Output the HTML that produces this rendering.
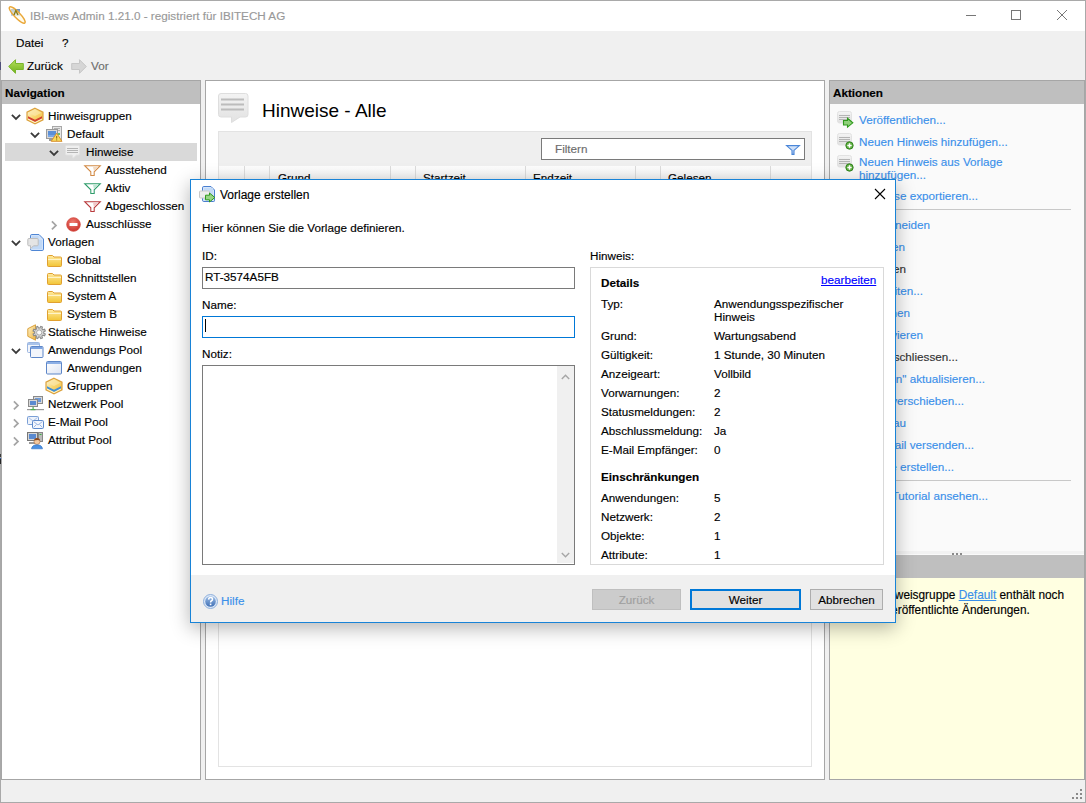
<!DOCTYPE html>
<html><head><meta charset="utf-8">
<style>
*{box-sizing:border-box;margin:0;padding:0}
html,body{width:1086px;height:803px;overflow:hidden;background:#f0f0f0}
body{position:relative;font-family:"Liberation Sans",sans-serif;font-size:11.7px;line-height:14px;color:#000}
.a{position:absolute}
svg.a{overflow:visible}
.t{position:absolute;white-space:nowrap;font-size:11.7px;line-height:14px;-webkit-text-stroke:0.15px currentColor}
.b{font-weight:bold}
.lk{color:#3a90ea}
</style></head><body>
<div class="a" style="left:0px;top:0px;width:1086px;height:803px;border:1px solid #a9a9a9"></div>
<div class="a" style="left:1px;top:1px;width:1084px;height:30px;background:#fff"></div>
<svg class="a" style="left:6px;top:4px;" width="22" height="22" viewBox="0 0 22 22">
<defs><linearGradient id="aig" x1="0" y1="0" x2="0" y2="1"><stop offset="0" stop-color="#6f8fb5"/><stop offset="1" stop-color="#c4dcf4"/></linearGradient></defs>
<rect x="5" y="5" width="9" height="7" fill="url(#aig)"/>
<ellipse cx="11.2" cy="11" rx="11" ry="2.9" transform="rotate(46 11.2 11)" fill="#fff8dc" fill-opacity=".55" stroke="#eaa83a" stroke-width="1.4"/>
<path d="M8 11L9.8 6.5L12 11" fill="none" stroke="#8a7a10" stroke-width="1.3"/></svg>
<div class="t" style="left:30px;top:9px;color:#999">IBI-aws Admin 1.21.0 - registriert für IBITECH AG</div>
<div class="a" style="left:966px;top:15px;width:10px;height:1px;background:#777"></div>
<div class="a" style="left:1011px;top:10px;width:10px;height:10px;border:1px solid #777"></div>
<svg class="a" style="left:1056px;top:9px;" width="12" height="12" viewBox="0 0 12 12"><path d="M1 1L11 11M11 1L1 11" stroke="#777" stroke-width="1"/></svg>
<div class="t" style="left:16px;top:36px;">Datei</div>
<div class="t" style="left:62px;top:36px;">?</div>
<svg class="a" style="left:8px;top:59px;" width="16" height="15" viewBox="0 0 16 15"><defs><linearGradient id="ga" x1="0" y1="0" x2="0" y2="1"><stop offset="0" stop-color="#b6e05a"/><stop offset="1" stop-color="#6fb21c"/></linearGradient></defs><path d="M0.7 7.5L7.5 0.7V4.5H15.3V10.5H7.5V14.3Z" fill="url(#ga)" stroke="#79b52a" stroke-width="1"/></svg>
<div class="t" style="left:27px;top:59px;">Zurück</div>
<svg class="a" style="left:71px;top:59px;" width="16" height="15" viewBox="0 0 16 15"><path d="M15.3 7.5L8.5 0.7V4.5H0.7V10.5H8.5V14.3Z" fill="#d6d6d6" stroke="#c6c6c6" stroke-width="1"/></svg>
<div class="t" style="left:91px;top:59px;color:#6d6d6d">Vor</div>
<div class="a" style="left:1px;top:80px;width:200px;height:700px;border:1px solid #a6a6a6;background:#fff"></div>
<div class="a" style="left:2px;top:81px;width:198px;height:23px;background:#bfbfbf"></div>
<div class="t b" style="left:5px;top:86px;">Navigation</div>
<div class="a" style="left:5px;top:143px;width:192px;height:18px;background:#d9d9d9"></div>
<svg class="a" style="left:11px;top:114px;" width="10" height="6" viewBox="0 0 10 6"><path d="M0.9 0.9L5 5L9.1 0.9" fill="none" stroke="#3a3a3a" stroke-width="1.8"/></svg>
<svg class="a" style="left:26px;top:107px;" width="18" height="18" viewBox="0 0 18 18">
<defs><linearGradient id="hg27108" x1="0" y1="0" x2="1" y2="1"><stop offset="0" stop-color="#fffbe8"/><stop offset=".5" stop-color="#f8d66e"/><stop offset="1" stop-color="#f0b840"/></linearGradient></defs>
<path d="M9 1.2L17 5.2V12.8L9 16.8L1 12.8V5.2Z" fill="url(#hg27108)" stroke="#dca23e" stroke-width="1.2"/>
<path d="M9 2.5L15.5 5.8L9 9L2.5 5.8Z" fill="#fbe7a8" opacity=".7"/>
<path d="M2 9.2L9 12.8L16 9.2V11.4L9 15L2 11.4Z" fill="#d2412f"/>
<path d="M2 12L9 15.6L16 12" fill="none" stroke="#fff7d6" stroke-width="1"/></svg>
<div class="t" style="left:48px;top:109px;">Hinweisgruppen</div>
<svg class="a" style="left:30px;top:132px;" width="10" height="6" viewBox="0 0 10 6"><path d="M0.9 0.9L5 5L9.1 0.9" fill="none" stroke="#3a3a3a" stroke-width="1.8"/></svg>
<svg class="a" style="left:46px;top:126px;" width="17" height="17" viewBox="0 0 17 17">
<rect x="6.5" y="0.5" width="9" height="13" fill="#e6e6e6" stroke="#a8a8a8"/>
<rect x="8" y="2" width="6" height="1" fill="#b0b0b0"/><rect x="8" y="4" width="6" height="1" fill="#b0b0b0"/>
<circle cx="13" cy="8" r="1" fill="#3cb043"/>
<rect x="0.5" y="3.5" width="11" height="9" fill="#d8d8d8" stroke="#9a9a9a"/>
<rect x="2" y="5" width="8" height="6" fill="#5b8fd6"/>
<rect x="2" y="9" width="8" height="2" fill="#7aa7e6"/>
<rect x="3" y="13" width="5" height="2" fill="#9a9a9a"/>
<path d="M10.7 7.2L16 15.3H5.2Z" fill="#f9dc5a" stroke="#d89030" stroke-width="1" stroke-linejoin="round"/>
<rect x="10.2" y="10" width="1" height="2.6" fill="#8a5a10"/><rect x="10.2" y="13.4" width="1" height="1" fill="#8a5a10"/></svg>
<div class="t" style="left:67px;top:127px;">Default</div>
<svg class="a" style="left:49px;top:150px;" width="10" height="6" viewBox="0 0 10 6"><path d="M0.9 0.9L5 5L9.1 0.9" fill="none" stroke="#3a3a3a" stroke-width="1.8"/></svg>
<svg class="a" style="left:65px;top:145px;" width="15" height="14" viewBox="0 0 15 14">
<path d="M0.5 1.5Q0.5 0.5 1.5 0.5H13.5Q14.5 0.5 14.5 1.5V9Q14.5 10 13.5 10H11.5L8 13.3L7.2 10H1.5Q0.5 10 0.5 9Z" fill="#efefef" stroke="#e2e2e2"/>
<rect x="2" y="3" width="11" height="1" fill="#b5b5b5"/><rect x="2" y="5" width="11" height="1" fill="#b5b5b5"/><rect x="2" y="7" width="11" height="1" fill="#b5b5b5"/></svg>
<div class="t" style="left:86px;top:145px;">Hinweise</div>
<svg class="a" style="left:84px;top:165px;" width="17" height="12" viewBox="0 0 17 12">
<path d="M0.7 0.7H16.3L10.2 6.8V10.5H6.8V6.8Z" fill="#fff" stroke="#d28a45" stroke-width="1.05" stroke-linejoin="miter"/>
<path d="M9 1.8H14.5L10 6.3Z" fill="#f3d9c0"/></svg>
<div class="t" style="left:105px;top:163px;">Ausstehend</div>
<svg class="a" style="left:84px;top:183px;" width="17" height="12" viewBox="0 0 17 12">
<path d="M0.7 0.7H16.3L10.2 6.8V10.5H6.8V6.8Z" fill="#fff" stroke="#2e9c6a" stroke-width="1.05" stroke-linejoin="miter"/>
<path d="M9 1.8H14.5L10 6.3Z" fill="#bfe5d2"/></svg>
<div class="t" style="left:105px;top:181px;">Aktiv</div>
<svg class="a" style="left:84px;top:201px;" width="17" height="12" viewBox="0 0 17 12">
<path d="M0.7 0.7H16.3L10.2 6.8V10.5H6.8V6.8Z" fill="#fff" stroke="#b83a3c" stroke-width="1.05" stroke-linejoin="miter"/>
<path d="M9 1.8H14.5L10 6.3Z" fill="#f0c8c8"/></svg>
<div class="t" style="left:105px;top:199px;">Abgeschlossen</div>
<svg class="a" style="left:51px;top:220px;" width="6" height="10" viewBox="0 0 6 10"><path d="M0.9 1.4L5 5.4L0.9 9.4" fill="none" stroke="#a4a4a4" stroke-width="1.7"/></svg>
<svg class="a" style="left:66px;top:217px;" width="15" height="15" viewBox="0 0 15 15">
<defs><radialGradient id="rb" cx=".45" cy=".35" r=".7"><stop offset="0" stop-color="#f07e72"/><stop offset="1" stop-color="#c8302a"/></radialGradient></defs>
<circle cx="7.5" cy="7.5" r="6.8" fill="url(#rb)" stroke="#d4463c" stroke-width=".8"/>
<rect x="3.5" y="6" width="8" height="3" rx=".5" fill="#fff"/></svg>
<div class="t" style="left:86px;top:217px;">Ausschlüsse</div>
<svg class="a" style="left:11px;top:240px;" width="10" height="6" viewBox="0 0 10 6"><path d="M0.9 0.9L5 5L9.1 0.9" fill="none" stroke="#3a3a3a" stroke-width="1.8"/></svg>
<svg class="a" style="left:27px;top:234px;" width="17" height="17" viewBox="0 0 17 17">
<path d="M3.5 1.8Q3.5 0.5 4.8 0.5H12L16.5 5V15.2Q16.5 16.5 15.2 16.5H4.8Q3.5 16.5 3.5 15.2Z" fill="#d2e3fa" stroke="#4f86d4" stroke-width="1"/>
<path d="M5 2H11.5V6H15V15H5Z" fill="#c0d8f6"/>
<path d="M0.8 5.5Q0.8 4.5 1.8 4.5H10.2Q11.2 4.5 11.2 5.5V10.8Q11.2 11.8 10.2 11.8H6.5L3.5 14.8V11.8H1.8Q0.8 11.8 0.8 10.8Z" fill="#e4e4e4" stroke="#bdbdbd" stroke-width="1"/></svg>
<div class="t" style="left:48px;top:235px;">Vorlagen</div>
<svg class="a" style="left:47px;top:255px;" width="15" height="12" viewBox="0 0 15 12">
<defs><linearGradient id="fg" x1="0" y1="0" x2="0" y2="1"><stop offset="0" stop-color="#ffeaa0"/><stop offset="1" stop-color="#f2c535"/></linearGradient></defs>
<path d="M0.5 1.5Q0.5 0.5 1.5 0.5H5.5L7 2H13.5Q14.5 2 14.5 3V10.5Q14.5 11.5 13.5 11.5H1.5Q0.5 11.5 0.5 10.5Z" fill="url(#fg)" stroke="#e0a030"/>
<path d="M1 4.5H14" stroke="#fff3c8" stroke-width="1"/></svg>
<div class="t" style="left:67px;top:253px;">Global</div>
<svg class="a" style="left:47px;top:273px;" width="15" height="12" viewBox="0 0 15 12">
<defs><linearGradient id="fg" x1="0" y1="0" x2="0" y2="1"><stop offset="0" stop-color="#ffeaa0"/><stop offset="1" stop-color="#f2c535"/></linearGradient></defs>
<path d="M0.5 1.5Q0.5 0.5 1.5 0.5H5.5L7 2H13.5Q14.5 2 14.5 3V10.5Q14.5 11.5 13.5 11.5H1.5Q0.5 11.5 0.5 10.5Z" fill="url(#fg)" stroke="#e0a030"/>
<path d="M1 4.5H14" stroke="#fff3c8" stroke-width="1"/></svg>
<div class="t" style="left:67px;top:271px;">Schnittstellen</div>
<svg class="a" style="left:47px;top:291px;" width="15" height="12" viewBox="0 0 15 12">
<defs><linearGradient id="fg" x1="0" y1="0" x2="0" y2="1"><stop offset="0" stop-color="#ffeaa0"/><stop offset="1" stop-color="#f2c535"/></linearGradient></defs>
<path d="M0.5 1.5Q0.5 0.5 1.5 0.5H5.5L7 2H13.5Q14.5 2 14.5 3V10.5Q14.5 11.5 13.5 11.5H1.5Q0.5 11.5 0.5 10.5Z" fill="url(#fg)" stroke="#e0a030"/>
<path d="M1 4.5H14" stroke="#fff3c8" stroke-width="1"/></svg>
<div class="t" style="left:67px;top:289px;">System A</div>
<svg class="a" style="left:47px;top:309px;" width="15" height="12" viewBox="0 0 15 12">
<defs><linearGradient id="fg" x1="0" y1="0" x2="0" y2="1"><stop offset="0" stop-color="#ffeaa0"/><stop offset="1" stop-color="#f2c535"/></linearGradient></defs>
<path d="M0.5 1.5Q0.5 0.5 1.5 0.5H5.5L7 2H13.5Q14.5 2 14.5 3V10.5Q14.5 11.5 13.5 11.5H1.5Q0.5 11.5 0.5 10.5Z" fill="url(#fg)" stroke="#e0a030"/>
<path d="M1 4.5H14" stroke="#fff3c8" stroke-width="1"/></svg>
<div class="t" style="left:67px;top:307px;">System B</div>
<svg class="a" style="left:27px;top:324px;" width="17" height="17" viewBox="0 0 17 17">
<defs><linearGradient id="stg" x1="0" y1="0" x2="1" y2="1"><stop offset="0" stop-color="#fff4cc"/><stop offset="1" stop-color="#efb43c"/></linearGradient></defs>
<path d="M8.5 0.8L8.5 16.2L0.8 12.3V4.7Z" fill="url(#stg)" stroke="#dba23c" stroke-width="1"/>
<path d="M16.74 9.22L18.31 10.02L17.60 11.75L15.92 11.20L14.90 12.22L15.45 13.90L13.72 14.61L12.92 13.04L11.48 13.04L10.68 14.61L8.95 13.90L9.50 12.22L8.48 11.20L6.80 11.75L6.09 10.02L7.66 9.22L7.66 7.78L6.09 6.98L6.80 5.25L8.48 5.80L9.50 4.78L8.95 3.10L10.68 2.39L11.48 3.96L12.92 3.96L13.72 2.39L15.45 3.10L14.90 4.78L15.92 5.80L17.60 5.25L18.31 6.98L16.74 7.78Z" fill="#dadada" stroke="#8c8c8c" stroke-width="1.1"/>
<circle cx="12.2" cy="8.5" r="2.6" fill="#fafafa" stroke="#a0a0a0" stroke-width=".9"/></svg>
<div class="t" style="left:48px;top:325px;">Statische Hinweise</div>
<svg class="a" style="left:11px;top:348px;" width="10" height="6" viewBox="0 0 10 6"><path d="M0.9 0.9L5 5L9.1 0.9" fill="none" stroke="#3a3a3a" stroke-width="1.8"/></svg>
<svg class="a" style="left:27px;top:342px;" width="17" height="16" viewBox="0 0 17 16">
<rect x="0.5" y="0.5" width="12" height="10" rx="1" fill="#f2f5fb" stroke="#9ab5e0"/><rect x="1" y="1" width="11" height="2" fill="#a9c3ea"/>
<rect x="3.5" y="4.5" width="12.5" height="11" rx="1" fill="#f2f5fb" stroke="#5d86c8"/><rect x="4" y="5" width="11.5" height="2" fill="#7ea4e0"/></svg>
<div class="t" style="left:48px;top:343px;">Anwendungs Pool</div>
<svg class="a" style="left:46px;top:361px;" width="16" height="14" viewBox="0 0 16 14">
<defs><linearGradient id="wg" x1="0" y1="0" x2="1" y2="1"><stop offset="0" stop-color="#ffffff"/><stop offset="1" stop-color="#dde4f2"/></linearGradient></defs>
<rect x="0.5" y="0.5" width="15" height="12.5" rx="1" fill="url(#wg)" stroke="#5d86c8"/><rect x="1" y="1" width="14" height="2" fill="#8db0e6"/></svg>
<div class="t" style="left:67px;top:361px;">Anwendungen</div>
<svg class="a" style="left:45px;top:377px;" width="18" height="18" viewBox="0 0 18 18">
<defs><linearGradient id="hg46378" x1="0" y1="0" x2="1" y2="1"><stop offset="0" stop-color="#fffbe8"/><stop offset=".5" stop-color="#f8d66e"/><stop offset="1" stop-color="#f0b840"/></linearGradient></defs>
<path d="M9 1.2L17 5.2V12.8L9 16.8L1 12.8V5.2Z" fill="url(#hg46378)" stroke="#dca23e" stroke-width="1.2"/>
<path d="M9 2.5L15.5 5.8L9 9L2.5 5.8Z" fill="#fbe7a8" opacity=".7"/>
<path d="M2 9.2L9 12.8L16 9.2V11.4L9 15L2 11.4Z" fill="#3f8fd8"/>
<path d="M2 12L9 15.6L16 12" fill="none" stroke="#fff7d6" stroke-width="1"/></svg>
<div class="t" style="left:67px;top:379px;">Gruppen</div>
<svg class="a" style="left:13px;top:400px;" width="6" height="10" viewBox="0 0 6 10"><path d="M0.9 1.4L5 5.4L0.9 9.4" fill="none" stroke="#a4a4a4" stroke-width="1.7"/></svg>
<svg class="a" style="left:27px;top:396px;" width="17" height="16" viewBox="0 0 17 16">
<rect x="6.5" y="0.5" width="9" height="7" fill="#d9d9d9" stroke="#8a8a8a"/><rect x="8" y="2" width="6" height="4" fill="#6f9bd8"/>
<rect x="1.5" y="3.5" width="9" height="7" fill="#d9d9d9" stroke="#8a8a8a"/><rect x="3" y="5" width="6" height="4" fill="#5b8bd0"/>
<rect x="0" y="13" width="17" height="1.2" fill="#9a9a9a"/><rect x="5.5" y="11" width="1.2" height="3" fill="#4caf50"/><rect x="3.5" y="13" width="5" height="1.2" fill="#4caf50"/></svg>
<div class="t" style="left:48px;top:397px;">Netzwerk Pool</div>
<svg class="a" style="left:13px;top:418px;" width="6" height="10" viewBox="0 0 6 10"><path d="M0.9 1.4L5 5.4L0.9 9.4" fill="none" stroke="#a4a4a4" stroke-width="1.7"/></svg>
<svg class="a" style="left:27px;top:416px;" width="17" height="13" viewBox="0 0 17 13">
<rect x="0.5" y="0.5" width="11" height="8" rx="1" fill="#eef3fb" stroke="#7a9fd6"/><path d="M1.5 1.5L6 5L10.5 1.5" fill="none" stroke="#a9c0e6"/>
<rect x="5.5" y="4.5" width="11" height="8" rx="1" fill="#f4f7fd" stroke="#5f8bcc"/><path d="M6.5 5.5L11 9L15.5 5.5M6.5 11.5L9.5 8.5M15.5 11.5L12.5 8.5" fill="none" stroke="#9cb6e2"/></svg>
<div class="t" style="left:48px;top:415px;">E-Mail Pool</div>
<svg class="a" style="left:13px;top:436px;" width="6" height="10" viewBox="0 0 6 10"><path d="M0.9 1.4L5 5.4L0.9 9.4" fill="none" stroke="#a4a4a4" stroke-width="1.7"/></svg>
<svg class="a" style="left:27px;top:432px;" width="17" height="17" viewBox="0 0 17 17">
<rect x="0.5" y="0.5" width="10" height="8" fill="#d6d6d6" stroke="#777"/><rect x="2" y="2" width="7" height="5" fill="#5a8ad0"/>
<rect x="11.5" y="0.5" width="4" height="9" fill="#bbb" stroke="#888"/><rect x="12.5" y="2" width="2" height="1" fill="#3cb043"/>
<rect x="2" y="10" width="6" height="2" fill="#999"/>
<circle cx="10" cy="9.5" r="3" fill="#f3c9a0" stroke="#a4663a" stroke-width=".6"/><path d="M7 8.5Q7.5 5.8 10 6Q12.8 6 13 8.5Q11 7.5 7 8.5Z" fill="#8a4a20"/>
<path d="M4.5 16.8Q5 12.8 10 12.8Q15 12.8 15.5 16.8Z" fill="#4a90e2" stroke="#2f6fbf" stroke-width=".6"/></svg>
<div class="t" style="left:48px;top:433px;">Attribut Pool</div>
<div class="a" style="left:205px;top:80px;width:620px;height:700px;border:1px solid #a6a6a6;background:#fff"></div>
<svg class="a" style="left:218px;top:93px;" width="31" height="30" viewBox="0 0 31 30">
<defs><linearGradient id="bbg" x1="0" y1="0" x2="0" y2="1"><stop offset="0" stop-color="#f3f3f3"/><stop offset="1" stop-color="#e2e2e2"/></linearGradient></defs>
<path d="M0.5 3Q0.5 0.5 3 0.5H27.5Q30 0.5 30 3V21.5Q30 24 27.5 24H22L13.5 29.5V24H3Q0.5 24 0.5 21.5Z" fill="url(#bbg)" stroke="#dedede"/>
<rect x="3" y="5.5" width="23" height="2" fill="#bcbcbc"/><rect x="3" y="10.5" width="23" height="2" fill="#bcbcbc"/><rect x="3" y="15.5" width="23" height="2" fill="#bcbcbc"/></svg>
<div class="t" style="left:262px;top:99px;font-size:19px;line-height:24px;-webkit-text-stroke:0">Hinweise - Alle</div>
<div class="a" style="left:218px;top:131px;width:594px;height:636px;border:1px solid #e3e3e3;background:#fff"></div>
<div class="a" style="left:219px;top:132px;width:592px;height:34px;background:#efefef"></div>
<div class="a" style="left:541px;top:138px;width:264px;height:22px;border:1px solid #7a7a7a;background:#fff"></div>
<div class="t" style="left:555px;top:142px;color:#6d6d6d">Filtern</div>
<svg class="a" style="left:786px;top:145px;" width="14" height="10" viewBox="0 0 14 10"><defs><linearGradient id="flg" x1="0" y1="0" x2="0" y2="1"><stop offset="0" stop-color="#dce9fb"/><stop offset="1" stop-color="#a9c6ef"/></linearGradient></defs><path d="M0.6 0.6H13.4L8 5.4V9.4H6V5.4Z" fill="url(#flg)" stroke="#4a86d8" stroke-width="1.1"/></svg>
<div class="a" style="left:219px;top:166px;width:592px;height:24px;background:linear-gradient(#fdfdfd,#ececec)"></div>
<div class="a" style="left:244px;top:166px;width:1px;height:24px;background:#dcdcdc"></div>
<div class="a" style="left:269px;top:166px;width:1px;height:24px;background:#dcdcdc"></div>
<div class="a" style="left:390px;top:166px;width:1px;height:24px;background:#dcdcdc"></div>
<div class="a" style="left:415px;top:166px;width:1px;height:24px;background:#dcdcdc"></div>
<div class="a" style="left:525px;top:166px;width:1px;height:24px;background:#dcdcdc"></div>
<div class="a" style="left:635px;top:166px;width:1px;height:24px;background:#dcdcdc"></div>
<div class="a" style="left:660px;top:166px;width:1px;height:24px;background:#dcdcdc"></div>
<div class="a" style="left:770px;top:166px;width:1px;height:24px;background:#dcdcdc"></div>
<div class="t" style="left:278px;top:171px;">Grund</div>
<div class="t" style="left:423px;top:171px;">Startzeit</div>
<div class="t" style="left:533px;top:171px;">Endzeit</div>
<div class="t" style="left:668px;top:171px;">Gelesen</div>
<div class="a" style="left:829px;top:80px;width:256px;height:700px;border:1px solid #a6a6a6;background:#fafafa"></div>
<div class="a" style="left:830px;top:81px;width:254px;height:23px;background:#bfbfbf"></div>
<div class="t b" style="left:833px;top:86px;">Aktionen</div>
<svg class="a" style="left:837px;top:111px;" width="17" height="17" viewBox="0 0 17 17">
<defs><linearGradient id="nbg" x1="0" y1="0" x2="0" y2="1"><stop offset="0" stop-color="#f4f4f4"/><stop offset="1" stop-color="#e0e0e0"/></linearGradient></defs>
<rect x="0.5" y="0.5" width="14" height="11.5" rx="2" fill="url(#nbg)" stroke="#e2e2e2"/>
<rect x="2" y="4" width="11" height="1" fill="#b4b4b4"/><rect x="2" y="6" width="11" height="1" fill="#b4b4b4"/><rect x="2" y="8" width="11" height="1" fill="#b4b4b4"/>
<path d="M6.5 9.5H10.5V7.3L15.8 11.8L10.5 16.2V14H6.5Z" fill="#8fd07a" stroke="#2f9a1c" stroke-width="1.1" stroke-linejoin="miter"/></svg>
<div class="t lk" style="left:859px;top:113px;">Veröffentlichen...</div>
<svg class="a" style="left:837px;top:133px;" width="17" height="17" viewBox="0 0 17 17">
<rect x="0.5" y="0.5" width="14" height="11.5" rx="2" fill="url(#nbg)" stroke="#e2e2e2"/>
<rect x="2" y="4" width="11" height="1" fill="#b4b4b4"/><rect x="2" y="6" width="11" height="1" fill="#b4b4b4"/><rect x="2" y="8" width="11" height="1" fill="#b4b4b4"/>
<circle cx="12.5" cy="12.5" r="3.7" fill="#5cae3c" stroke="#2f7f1c" stroke-width=".9"/><path d="M12.5 10.3V14.7M10.3 12.5H14.7" stroke="#fff" stroke-width="1.5"/></svg>
<div class="t lk" style="left:859px;top:135px;">Neuen Hinweis hinzufügen...</div>
<svg class="a" style="left:837px;top:155px;" width="17" height="17" viewBox="0 0 17 17">
<rect x="0.5" y="0.5" width="14" height="11.5" rx="2" fill="url(#nbg)" stroke="#e2e2e2"/>
<rect x="2" y="4" width="11" height="1" fill="#b4b4b4"/><rect x="2" y="6" width="11" height="1" fill="#b4b4b4"/><rect x="2" y="8" width="11" height="1" fill="#b4b4b4"/>
<circle cx="12.5" cy="12.5" r="3.7" fill="#5cae3c" stroke="#2f7f1c" stroke-width=".9"/><path d="M12.5 10.3V14.7M10.3 12.5H14.7" stroke="#fff" stroke-width="1.5"/></svg>
<div class="t lk" style="left:859px;top:155px;">Neuen Hinweis aus Vorlage</div>
<div class="t lk" style="left:859px;top:168px;">hinzufügen...</div>
<div class="t lk" style="left:859px;top:189px;">Hinweise exportieren...</div>
<div class="a" style="left:837px;top:209px;width:234px;height:1px;background:#c8c8c8"></div>
<div class="t" style="right:156px;top:218px;color:#3a90ea">Ausschneiden</div>
<div class="t" style="right:181px;top:240px;color:#3a90ea">Kopieren</div>
<div class="t" style="right:180px;top:262px;color:#333">Einfügen</div>
<div class="t" style="right:163px;top:284px;color:#3a90ea">Bearbeiten...</div>
<div class="t" style="right:176px;top:306px;color:#3a90ea">Löschen</div>
<div class="t" style="right:163px;top:328px;color:#3a90ea">Aktivieren</div>
<div class="t" style="right:128px;top:350px;color:#333">Abschliessen...</div>
<div class="t" style="right:101px;top:372px;color:#3a90ea">Vorlage "Hinweisen" aktualisieren...</div>
<div class="t" style="right:122px;top:394px;color:#3a90ea">Hinweise verschieben...</div>
<div class="t" style="right:180px;top:416px;color:#3a90ea">Vorschau</div>
<div class="t" style="right:112px;top:438px;color:#3a90ea">E-Mail versenden...</div>
<div class="t" style="right:132px;top:460px;color:#3a90ea">Vorlage erstellen...</div>
<div class="a" style="left:837px;top:480px;width:234px;height:1px;background:#c8c8c8"></div>
<div class="t lk" style="right:98px;top:489px">Lernvideo / Tutorial ansehen...</div>
<div class="a" style="left:830px;top:551px;width:254px;height:3px;background:#f2f2f2"></div>
<div class="a" style="left:952px;top:553px;width:2px;height:2px;background:#8a8a8a"></div>
<div class="a" style="left:956px;top:553px;width:2px;height:2px;background:#8a8a8a"></div>
<div class="a" style="left:960px;top:553px;width:2px;height:2px;background:#8a8a8a"></div>
<div class="a" style="left:830px;top:555px;width:254px;height:23px;background:#bfbfbf"></div>
<div class="a" style="left:830px;top:578px;width:254px;height:201px;background:#ffffe1"></div>
<div class="t" style="left:856px;top:588px;font-size:11.85px">Die Hinweisgruppe <span style="color:#3a90ea;text-decoration:underline">Default</span> enthält noch</div>
<div class="t" style="left:872px;top:603px;font-size:11.85px">unveröffentlichte Änderungen.</div>
<div class="a" style="left:1080px;top:797px;width:2px;height:2px;background:#8a8a8a"></div>
<div class="a" style="left:1076px;top:797px;width:2px;height:2px;background:#8a8a8a"></div>
<div class="a" style="left:1072px;top:797px;width:2px;height:2px;background:#8a8a8a"></div>
<div class="a" style="left:1080px;top:793px;width:2px;height:2px;background:#8a8a8a"></div>
<div class="a" style="left:1076px;top:793px;width:2px;height:2px;background:#8a8a8a"></div>
<div class="a" style="left:1080px;top:789px;width:2px;height:2px;background:#8a8a8a"></div>
<div class="a" style="left:190px;top:179px;width:706px;height:444px;border:1px solid #1883d7;background:#fff;box-shadow:0 5px 18px rgba(0,0,0,.30)"></div>
<div class="a" style="left:191px;top:575px;width:704px;height:47px;background:#f0f0f0"></div>
<svg class="a" style="left:199px;top:186px;" width="17" height="17" viewBox="0 0 17 17">
<path d="M3.5 1.8Q3.5 0.5 4.8 0.5H12L15.5 4V14.7Q15.5 15.5 14.7 15.5H4.8Q3.5 15.5 3.5 14.2Z" fill="#d6e6fb" stroke="#4a7fcf" stroke-width="1"/>
<rect x="5" y="2" width="9" height="12" fill="#c4dbf7"/>
<rect x="0.5" y="5" width="10" height="7" rx="1" fill="#ececec" stroke="#c8c8c8"/>
<path d="M6.5 9.2H10.5V7L15.8 11.5L10.5 16V13.8H6.5Z" fill="#98d486" stroke="#2e9a1c" stroke-width="1"/></svg>
<div class="t" style="left:220px;top:188px;font-size:12px">Vorlage erstellen</div>
<svg class="a" style="left:874px;top:188px;" width="12" height="12" viewBox="0 0 12 12"><path d="M1 1L11 11M11 1L1 11" stroke="#000" stroke-width="1.1"/></svg>
<div class="t" style="left:202px;top:221px;">Hier können Sie die Vorlage definieren.</div>
<div class="t" style="left:202px;top:249px;">ID:</div>
<div class="a" style="left:202px;top:267px;width:373px;height:22px;border:1px solid #7a7a7a;background:#fff"></div>
<div class="t" style="left:205px;top:270px;">RT-3574A5FB</div>
<div class="t" style="left:202px;top:298px;">Name:</div>
<div class="a" style="left:202px;top:316px;width:373px;height:22px;border:1px solid #0078d7;background:#fff"></div>
<div class="a" style="left:205px;top:319px;width:1px;height:13px;background:#000"></div>
<div class="t" style="left:202px;top:347px;">Notiz:</div>
<div class="a" style="left:202px;top:365px;width:373px;height:200px;border:1px solid #7a7a7a;background:#fff"></div>
<div class="a" style="left:557px;top:366px;width:17px;height:197px;background:#f0f0f0"></div>
<svg class="a" style="left:561px;top:374px;" width="9" height="6" viewBox="0 0 9 6"><path d="M0.8 5L4.5 1.2L8.2 5" fill="none" stroke="#a6a6a6" stroke-width="1.4"/></svg>
<svg class="a" style="left:561px;top:552px;" width="9" height="6" viewBox="0 0 9 6"><path d="M0.8 1L4.5 4.8L8.2 1" fill="none" stroke="#a6a6a6" stroke-width="1.4"/></svg>
<div class="t" style="left:590px;top:249px;">Hinweis:</div>
<div class="a" style="left:590px;top:267px;width:294px;height:298px;border:1px solid #d9d9d9;background:#fff"></div>
<div class="t b" style="left:601px;top:276px;">Details</div>
<div class="t" style="left:821px;top:273px;color:#00f;text-decoration:underline">bearbeiten</div>
<div class="t" style="left:601px;top:297px;">Typ:</div>
<div class="t" style="left:714px;top:297px;">Anwendungsspezifischer</div>
<div class="t" style="left:714px;top:310px;">Hinweis</div>
<div class="t" style="left:601px;top:329px;">Grund:</div>
<div class="t" style="left:714px;top:329px;">Wartungsabend</div>
<div class="t" style="left:601px;top:348px;">Gültigkeit:</div>
<div class="t" style="left:714px;top:348px;">1 Stunde, 30 Minuten</div>
<div class="t" style="left:601px;top:367px;">Anzeigeart:</div>
<div class="t" style="left:714px;top:367px;">Vollbild</div>
<div class="t" style="left:601px;top:386px;">Vorwarnungen:</div>
<div class="t" style="left:714px;top:386px;">2</div>
<div class="t" style="left:601px;top:405px;">Statusmeldungen:</div>
<div class="t" style="left:714px;top:405px;">2</div>
<div class="t" style="left:601px;top:424px;">Abschlussmeldung:</div>
<div class="t" style="left:714px;top:424px;">Ja</div>
<div class="t" style="left:601px;top:443px;">E-Mail Empfänger:</div>
<div class="t" style="left:714px;top:443px;">0</div>
<div class="t" style="left:601px;top:491px;">Anwendungen:</div>
<div class="t" style="left:714px;top:491px;">5</div>
<div class="t" style="left:601px;top:510px;">Netzwerk:</div>
<div class="t" style="left:714px;top:510px;">2</div>
<div class="t" style="left:601px;top:529px;">Objekte:</div>
<div class="t" style="left:714px;top:529px;">1</div>
<div class="t" style="left:601px;top:548px;">Attribute:</div>
<div class="t" style="left:714px;top:548px;">1</div>
<div class="t b" style="left:601px;top:470px;">Einschränkungen</div>
<svg class="a" style="left:203px;top:594px;" width="15" height="15" viewBox="0 0 15 15">
<defs><linearGradient id="hlg" x1="0" y1="0" x2="0" y2="1"><stop offset="0" stop-color="#9cbde6"/><stop offset="1" stop-color="#3f6fb5"/></linearGradient></defs>
<circle cx="7.5" cy="7.5" r="7" fill="#dbe7f7" stroke="#8fb0dc" stroke-width="1"/>
<circle cx="7.5" cy="7.5" r="5.3" fill="url(#hlg)"/>
<path d="M5.6 5.6Q5.7 3.6 7.6 3.6Q9.5 3.6 9.5 5.3Q9.5 6.4 8.3 7Q7.6 7.4 7.6 8.5" fill="none" stroke="#fff" stroke-width="1.5"/>
<rect x="6.8" y="9.6" width="1.6" height="1.6" fill="#fff"/></svg>
<div class="t lk" style="left:221px;top:594px;">Hilfe</div>
<div class="a" style="left:592px;top:589px;width:89px;height:21px;border:1px solid #bfbfbf;background:#ccc"></div>
<div class="t" style="left:592px;top:593px;width:89px;text-align:center;color:#a0a0a0">Zurück</div>
<div class="a" style="left:690px;top:589px;width:111px;height:21px;border:2px solid #0078d7;background:#e1e1e1"></div>
<div class="t" style="left:690px;top:593px;width:111px;text-align:center">Weiter</div>
<div class="a" style="left:810px;top:589px;width:73px;height:21px;border:1px solid #adadad;background:#e1e1e1"></div>
<div class="t" style="left:810px;top:593px;width:73px;text-align:center">Abbrechen</div>
<div class="a" style="left:0px;top:62px;width:1px;height:8px;background:#50507a"></div>
<div class="a" style="left:0px;top:454px;width:1px;height:3px;background:#3a3a3a"></div>
<div class="a" style="left:0px;top:458px;width:1px;height:1px;background:#2856a8"></div>
<div class="a" style="left:0px;top:459px;width:1px;height:5px;background:#262626"></div>
</body></html>
